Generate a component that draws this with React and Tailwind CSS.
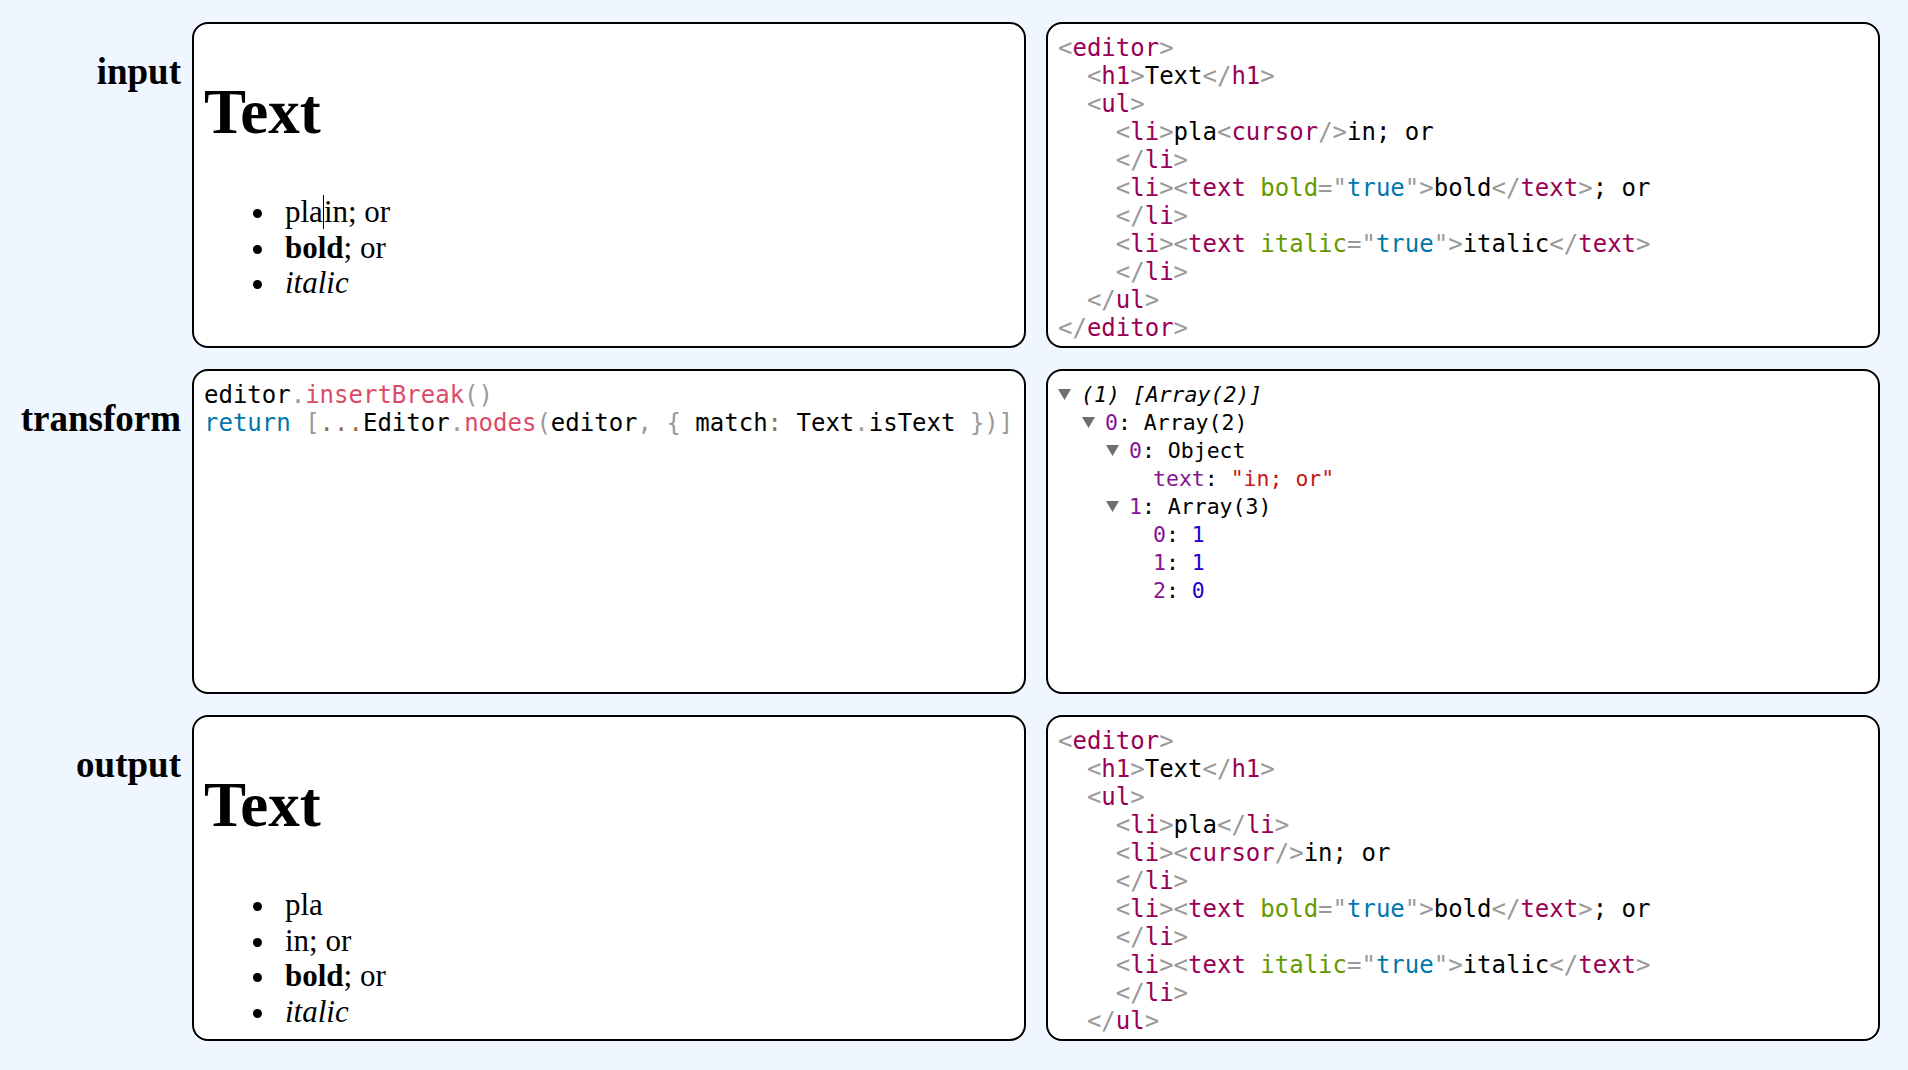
import React from 'react';

const serif = { fontFamily: '"Liberation Serif", "Times New Roman", serif' };
const mono = { fontFamily: '"DejaVu Sans Mono", Menlo, monospace' };

// prism-like token colours
const P = ({ children }) => <span className="text-[#999999]">{children}</span>;
const Tag = ({ children }) => <span className="text-[#990055]">{children}</span>;
const Attr = ({ children }) => <span className="text-[#669900]">{children}</span>;
const Val = ({ children }) => <span className="text-[#0077aa]">{children}</span>;
const Fn = ({ children }) => <span className="text-[#dd4a68]">{children}</span>;
const Op = ({ children }) => <span className="text-[#9a6e3a]">{children}</span>;

const Open = ({ name }) => (
  <>
    <P>&lt;</P>
    <Tag>{name}</Tag>
    <P>&gt;</P>
  </>
);
const Close = ({ name }) => (
  <>
    <P>&lt;/</P>
    <Tag>{name}</Tag>
    <P>&gt;</P>
  </>
);
const TextOpen = ({ attr }) => (
  <>
    <P>&lt;</P>
    <Tag>text</Tag> <Attr>{attr}</Attr>
    <P>="</P>
    <Val>true</Val>
    <P>"&gt;</P>
  </>
);

const Panel = ({ children, className = '' }) => (
  <div className={`bg-white border-2 border-black rounded-[16px] p-[10px] overflow-hidden ${className}`}>
    {children}
  </div>
);

const Label = ({ children }) => (
  <div className="w-[192px] shrink-0 text-right pr-[11px] pt-[29px] text-[37px] leading-[42px] font-bold text-black" style={serif}>
    {children}
  </div>
);

const Item = ({ children }) => (
  <li className="list-none">
    <span className="inline-block w-[9px] h-[9px] rounded-full bg-black -ml-[32px] mr-[23px] align-[4px]" />
    {children}
  </li>
);

const RichDoc = ({ items }) => (
  <div style={serif} className="text-black">
    <h1 className="mt-[42px] text-[63px] leading-[72px] font-bold">Text</h1>
    <ul className="mt-[46px] pl-[81px] text-[31px] leading-[35.5px]">
      {items}
    </ul>
  </div>
);

const Cursor = () => <span className="inline-block w-px h-[34px] bg-black align-[-7px]" />;

const Code = ({ lines }) => (
  <div style={mono} className="text-[24px] leading-[28px] text-black whitespace-pre">
    {lines.map((l, i) => (
      <div key={i}>{l}</div>
    ))}
  </div>
);

const inputXml = [
  <Open name="editor" />,
  <>  <Open name="h1" />Text<Close name="h1" /></>,
  <>  <Open name="ul" /></>,
  <>    <Open name="li" />pla<P>&lt;</P><Tag>cursor</Tag><P>/&gt;</P>in; or</>,
  <>    <Close name="li" /></>,
  <>    <Open name="li" /><TextOpen attr="bold" />bold<Close name="text" />; or</>,
  <>    <Close name="li" /></>,
  <>    <Open name="li" /><TextOpen attr="italic" />italic<Close name="text" /></>,
  <>    <Close name="li" /></>,
  <>  <Close name="ul" /></>,
  <Close name="editor" />,
];

const outputXml = [
  <Open name="editor" />,
  <>  <Open name="h1" />Text<Close name="h1" /></>,
  <>  <Open name="ul" /></>,
  <>    <Open name="li" />pla<Close name="li" /></>,
  <>    <Open name="li" /><P>&lt;</P><Tag>cursor</Tag><P>/&gt;</P>in; or</>,
  <>    <Close name="li" /></>,
  <>    <Open name="li" /><TextOpen attr="bold" />bold<Close name="text" />; or</>,
  <>    <Close name="li" /></>,
  <>    <Open name="li" /><TextOpen attr="italic" />italic<Close name="text" /></>,
  <>    <Close name="li" /></>,
  <>  <Close name="ul" /></>,
];

const transformCode = [
  <>editor<P>.</P><Fn>insertBreak</Fn><P>()</P></>,
  <>
    <Val>return</Val> <P>[</P><Op>...</Op>Editor<P>.</P><Fn>nodes</Fn><P>(</P>editor<P>,</P> <P>{'{'}</P> match<Op>:</Op> Text<P>.</P>isText <P>{'}'})]</P>
  </>,
];

const Triangle = () => (
  <svg width="13" height="11" viewBox="0 0 13 11" className="shrink-0">
    <polygon points="0,0 13,0 6.5,11" fill="#6e6e6e" />
  </svg>
);

const Row = ({ depth, open, children }) => (
  <div className="flex items-center h-[28px]" style={{ paddingLeft: depth * 24 }}>
    {open ? (
      <span className="w-[23px] shrink-0 flex items-center">
        <Triangle />
      </span>
    ) : (
      <span className="w-[23px] shrink-0" />
    )}
    <span>{children}</span>
  </div>
);

const Key = ({ children }) => <span className="text-[#881391]">{children}</span>;
const Num = ({ children }) => <span className="text-[#1c00cf]">{children}</span>;

const ConsoleTree = () => (
  <div style={mono} className="text-[21.5px] text-black whitespace-pre">
    <Row depth={0} open><span className="italic">(1) [Array(2)]</span></Row>
    <Row depth={1} open><Key>0</Key>: Array(2)</Row>
    <Row depth={2} open><Key>0</Key>: Object</Row>
    <Row depth={3}><Key>text</Key>: <span className="text-[#c41a16]">"in; or"</span></Row>
    <Row depth={2} open><Key>1</Key>: Array(3)</Row>
    <Row depth={3}><Key>0</Key>: <Num>1</Num></Row>
    <Row depth={3}><Key>1</Key>: <Num>1</Num></Row>
    <Row depth={3}><Key>2</Key>: <Num>0</Num></Row>
  </div>
);

const App = () => {
  return (
    <div className="h-screen bg-[#eff6ff] pt-[22px] pb-[29px] pr-[28px] flex flex-col gap-[21px]">
      {/* input */}
      <div className="flex flex-1 min-h-0">
        <Label>input</Label>
        <div className="flex-1 grid grid-cols-2 gap-[20px]">
          <Panel>
            <RichDoc
              items={
                <>
                  <Item>pla<Cursor />in; or</Item>
                  <Item><b>bold</b>; or</Item>
                  <Item><i>italic</i></Item>
                </>
              }
            />
          </Panel>
          <Panel>
            <Code lines={inputXml} />
          </Panel>
        </div>
      </div>

      {/* transform */}
      <div className="flex flex-1 min-h-0">
        <Label>transform</Label>
        <div className="flex-1 grid grid-cols-2 gap-[20px]">
          <Panel>
            <Code lines={transformCode} />
          </Panel>
          <Panel>
            <ConsoleTree />
          </Panel>
        </div>
      </div>

      {/* output */}
      <div className="flex flex-1 min-h-0">
        <Label>output</Label>
        <div className="flex-1 grid grid-cols-2 gap-[20px]">
          <Panel>
            <RichDoc
              items={
                <>
                  <Item>pla</Item>
                  <Item>in; or</Item>
                  <Item><b>bold</b>; or</Item>
                  <Item><i>italic</i></Item>
                </>
              }
            />
          </Panel>
          <Panel>
            <Code lines={outputXml} />
          </Panel>
        </div>
      </div>
    </div>
  );
};

export default App;
